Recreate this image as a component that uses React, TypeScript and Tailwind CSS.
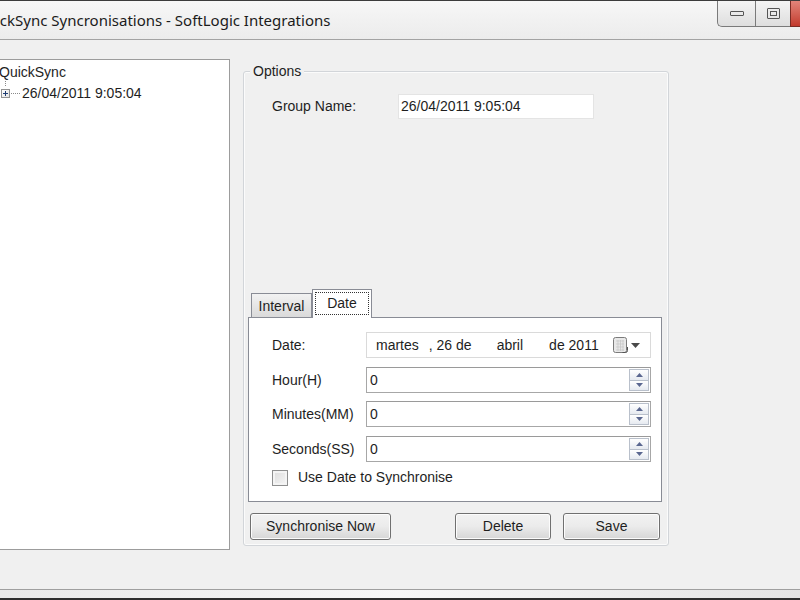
import React from 'react';

const ui = "font-['Liberation_Sans',Arial,sans-serif]";

function TitleBar() {
  return (
    <div className="flex h-[40px] shrink-0 items-start border-t border-b border-t-[#3c3c3c] border-b-[#a3a3a3] bg-gradient-to-b from-[#f7f7f7] via-[#f1f1f1] to-[#ececec]">
      <div className="-ml-[25px] pt-[9px] font-['Noto_Sans',sans-serif] text-[15px] leading-[20px] text-[#1b1b1b]">
        QuickSync Syncronisations - SoftLogic Integrations
      </div>
      <div className="ml-auto flex">
        <div className="flex h-[26px] w-[38px] items-center justify-center rounded-bl-[5px] border-b border-l border-[#7a7a7a] bg-gradient-to-b from-[#f4f4f4] to-[#dedede]">
          <div className="h-[5px] w-[14px] rounded-[1px] border border-[#555]" />
        </div>
        <div className="flex h-[26px] w-[35px] items-center justify-center border-b border-l border-[#7a7a7a] bg-gradient-to-b from-[#f4f4f4] to-[#dedede]">
          <div className="flex h-[11px] w-[13px] items-center justify-center rounded-[1px] border border-[#555]">
            <div className="h-[5px] w-[7px] border border-[#555]" />
          </div>
        </div>
        <div className="h-[26px] w-[10px] border-b border-l border-[#7a2c24] bg-gradient-to-b from-[#e2847a] to-[#c2392c]" />
      </div>
    </div>
  );
}

function TreePane() {
  return (
    <div className="mt-[19px] h-[491px] w-[230px] shrink-0 border-t border-r border-b border-[#9c9c9c] bg-white pt-[2px] text-[14px] text-[#1e1e1e]">
      <div className="-ml-[1px] flex h-[21px] items-center">QuickSync</div>
      <div className="flex h-[21px] items-center">
        <div className="relative flex w-[22px] items-center">
          <div className="ml-[1px] flex h-[9px] w-[9px] items-center justify-center border border-[#919191] bg-gradient-to-br from-white to-[#e2e2e2]">
            <svg width="7" height="7" viewBox="0 0 7 7">
              <path d="M1 3.5h5M3.5 1v5" stroke="#1e3c72" strokeWidth="1" />
            </svg>
          </div>
          <div className="ml-[1px] w-[9px] border-t border-dotted border-[#8a8a8a]" />
          <div className="absolute left-[5px] -top-[10px] h-[7px] border-l border-dotted border-[#8a8a8a]" />
        </div>
        <span>26/04/2011 9:05:04</span>
      </div>
    </div>
  );
}

function SpinBox({ value }: { value: string }) {
  return (
    <div className="flex h-[26px] w-[285px] items-stretch border border-[#a7a7a7] border-t-[#9a9a9a] bg-white">
      <div className="flex flex-1 items-center pl-[3px]">{value}</div>
      <div className="my-[1px] mr-[1px] flex w-[20px] flex-col">
        <div className="flex flex-1 items-center justify-center border border-[#b9c0cb] bg-gradient-to-b from-white to-[#e6eaf0]">
          <svg width="7" height="4" viewBox="0 0 7 4">
            <path d="M0 4L3.5 0L7 4Z" fill="#5a6790" />
          </svg>
        </div>
        <div className="flex flex-1 items-center justify-center border border-t-0 border-[#b9c0cb] bg-gradient-to-b from-white to-[#e6eaf0]">
          <svg width="7" height="4" viewBox="0 0 7 4">
            <path d="M0 0L3.5 4L7 0Z" fill="#5a6790" />
          </svg>
        </div>
      </div>
    </div>
  );
}

function DatePicker() {
  return (
    <div className="flex h-[26px] w-[285px] items-center border border-[#dadada] bg-white">
      <span className="ml-[9px]">martes</span>
      <span className="ml-[10px]">, 26 de</span>
      <span className="ml-[25px]">abril</span>
      <span className="ml-[26px]">de 2011</span>
      <div className="ml-auto mr-[10px] flex items-center gap-[3px]">
        <svg width="15" height="16" viewBox="0 0 15 16">
          <rect x="0.5" y="0.5" width="13" height="15" rx="2" fill="#e8e8e8" stroke="#7b7b7b" />
          <path d="M3 4h8M3 7h8M3 10h8M3 13h8M5 3v11M7.5 3v11M10 3v11" stroke="#c4c4c4" strokeWidth="0.7" />
          <path d="M14.5 10v3.5a2 2 0 0 1-2 2h-3" stroke="#555" fill="none" />
        </svg>
        <svg width="9" height="5" viewBox="0 0 9 5">
          <path d="M0 0h9L4.5 5Z" fill="#4a4a4a" />
        </svg>
      </div>
    </div>
  );
}

function Field({ label, children, className = '' }: { label: string; children: React.ReactNode; className?: string }) {
  return (
    <div className={`flex items-center ${className}`}>
      <span className="w-[94px] shrink-0">{label}</span>
      {children}
    </div>
  );
}

function WinButton({ label, className = '' }: { label: string; className?: string }) {
  return (
    <div
      className={`flex h-[27px] items-center justify-center rounded-[3px] border border-[#707070] bg-gradient-to-b from-[#f2f2f2] via-[#ebebeb] to-[#d6d6d6] shadow-[inset_0_0_0_1px_#fcfcfc] ${className}`}
    >
      {label}
    </div>
  );
}

function TabControl() {
  return (
    <div className="ml-[4px] flex w-[414px] flex-col">
      <div className="flex items-end pl-[3px]">
        <div className="flex h-[24px] w-[61px] items-center justify-center border border-b-0 border-[#898c95] bg-gradient-to-b from-[#f2f2f2] to-[#dadada] pt-[1px]">
          Interval
        </div>
        <div className="relative z-10 -mb-px h-[29px] w-[60px] border border-b-0 border-[#898c95] bg-white p-[2px]">
          <div className="flex h-[23px] items-center justify-center border border-dotted border-[#333]">Date</div>
        </div>
      </div>
      <div className="h-[185px] border border-[#898c95] bg-white pl-[23px] pt-[14px]">
        <Field label="Date:">
          <DatePicker />
        </Field>
        <Field label="Hour(H)" className="mt-[9px]">
          <SpinBox value="0" />
        </Field>
        <Field label="Minutes(MM)" className="mt-[8px]">
          <SpinBox value="0" />
        </Field>
        <Field label="Seconds(SS)" className="mt-[9px]">
          <SpinBox value="0" />
        </Field>
        <div className="mt-[5px] flex items-center">
          <div className="h-[16px] w-[16px] border border-[#8e8f8f] bg-gradient-to-br from-[#dcdcdc] to-[#f6f6f6] shadow-[inset_0_0_0_2px_#f4f4f4]" />
          <span className="ml-[10px]">Use Date to Synchronise</span>
        </div>
      </div>
    </div>
  );
}

function OptionsGroup() {
  return (
    <div className="relative ml-[13px] mt-[31px] h-[475px] w-[426px] rounded-[3px] border border-[#d2d5d9] shadow-[inset_0_0_0_1px_#fbfbfb]">
      <span className="absolute -top-[9px] left-[6px] bg-[#f0f0f0] px-[3px] leading-[16px]">Options</span>
      <div className="mt-[22px] flex items-center pl-[28px]">
        <span className="w-[126px] shrink-0">Group Name:</span>
        <div className="flex h-[25px] w-[196px] items-center border border-[#e4e4e4] bg-white pl-[2px]">
          26/04/2011 9:05:04
        </div>
      </div>
      <div className="mt-[170px]">
        <TabControl />
      </div>
      <div className="mt-[11px] flex pl-[6px]">
        <WinButton label="Synchronise Now" className="w-[141px]" />
        <WinButton label="Delete" className="ml-[64px] w-[96px]" />
        <WinButton label="Save" className="ml-[12px] w-[97px]" />
      </div>
    </div>
  );
}

export default function App() {
  return (
    <div className={`flex h-[600px] w-[800px] flex-col overflow-hidden bg-[#f0f0f0] text-[14px] text-[#1e1e1e] ${ui}`}>
      <TitleBar />
      <div className="flex h-[549px] shrink-0 items-start">
        <TreePane />
        <OptionsGroup />
      </div>
      <div className="h-px shrink-0 bg-[#9f9f9f]" />
      <div className="h-[8px] shrink-0 bg-gradient-to-r from-[#e9e9e9] via-[#f7f7f7] to-[#e4e4e4]" />
      <div className="h-[2px] shrink-0 bg-[#2e2e2e]" />
    </div>
  );
}
